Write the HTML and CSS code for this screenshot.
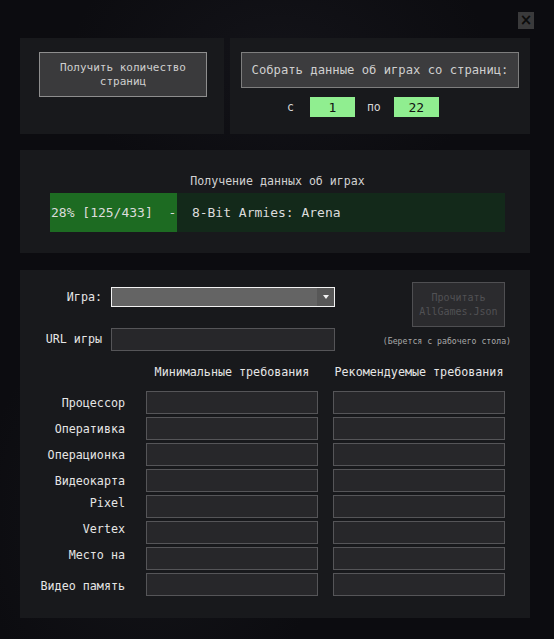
FILE: index.html
```html
<!DOCTYPE html>
<html lang="ru">
<head>
<meta charset="utf-8">
<title>Парсер игр</title>
<link rel="stylesheet" href="styles.css">
</head>
<body>
<div class="window">
  <div class="topbar"><button class="close">×</button></div>

  <div class="row1">
    <section class="panel p-count">
      <button class="btn btn-count">Получить количество<br>страниц</button>
    </section>
    <section class="panel p-collect">
      <button class="btn btn-collect">Собрать данные об играх со страниц:</button>
      <div class="range">
        <span class="rl">с</span>
        <input class="green" value="1" readonly>
        <span class="rl po">по</span>
        <input class="green" value="22" readonly>
      </div>
    </section>
  </div>

  <section class="panel p-progress">
    <div class="ptitle">Получение данных об играх</div>
    <div class="bar">
      <div class="fill" style="width:28%"></div>
      <span class="bar-text">28% [125/433]  -  8-Bit Armies: Arena</span>
    </div>
  </section>

  <section class="panel p-main">
    <div class="top">
      <label class="lbl lbl-game">Игра:</label>
      <div class="select"><span class="sel-field"></span><span class="sel-arrow"></span></div>
      <button class="btn-read" disabled>Прочитать<br>AllGames.Json</button>

      <label class="lbl lbl-url">URL игры</label>
      <input class="field url" readonly>
      <span class="note">(Берется с рабочего стола)</span>
    </div>

    <div class="table">
      <span></span>
      <div class="head">Минимальные требования</div>
      <div class="head">Рекомендуемые требования</div>

      <label class="tl">Процессор</label><input class="field" readonly><input class="field" readonly>
      <label class="tl">Оперативка</label><input class="field" readonly><input class="field" readonly>
      <label class="tl">Операционка</label><input class="field" readonly><input class="field" readonly>
      <label class="tl">Видеокарта</label><input class="field" readonly><input class="field" readonly>
      <label class="tl up">Pixel</label><input class="field" readonly><input class="field" readonly>
      <label class="tl up">Vertex</label><input class="field" readonly><input class="field" readonly>
      <label class="tl up">Место на</label><input class="field" readonly><input class="field" readonly>
      <label class="tl down">Видео память</label><input class="field" readonly><input class="field" readonly>
    </div>
  </section>
</div>
</body>
</html>
```

FILE: styles.css
```css
* { box-sizing: border-box; }

html, body {
  margin: 0;
  height: 100%;
}

body {
  background:
    radial-gradient(ellipse 300px 200px at 280px 60px, rgba(40, 40, 50, 0.25), transparent 70%),
    radial-gradient(ellipse 250px 300px at 150px 520px, rgba(40, 42, 48, 0.25), transparent 70%),
    #0c0c10;
  font-family: "DejaVu Sans Mono", "Liberation Mono", monospace;
  color: #e2e2e2;
  overflow: hidden;
}

.window {
  width: 510px;
  margin-left: 20px;
}

.topbar {
  height: 38px;
  display: flex;
  justify-content: flex-end;
  align-items: flex-start;
}

.close {
  margin-top: 12px;
  margin-right: -4px;
  width: 16px;
  height: 17px;
  padding: 0;
  border: none;
  background: #3a3a3b;
  color: #0c0c0c;
  font: bold 15px/17px "DejaVu Sans", sans-serif;
  text-align: center;
}

.panel {
  background: #18191c;
}

.row1 {
  display: flex;
  gap: 6px;
  height: 96px;
}

.btn {
  display: block;
  padding: 0;
  background: #3a3a3c;
  border: 1px solid #8e8e8e;
  color: #cfcfcf;
  font-family: "DejaVu Sans Mono", monospace;
  text-align: center;
}

.p-count {
  width: 204px;
  padding: 14px 0 0 19px;
}

.btn-count {
  width: 168px;
  height: 45px;
  font-size: 11px;
  line-height: 14px;
}

.p-collect {
  flex: 1;
  padding: 14px 11px 0;
}

.btn-collect {
  width: 278px;
  height: 36px;
  font-size: 12.2px;
  border-color: #7e7e7e;
  background: #3c3c3e;
}

.range {
  display: flex;
  align-items: center;
  margin-top: 9px;
  padding-left: 46px;
  height: 20px;
}

.rl {
  font-size: 11.5px;
  color: #d8d8d8;
  margin-right: 16px;
}

.rl.po {
  margin-left: 12px;
  margin-right: 13px;
}

.green {
  width: 45px;
  height: 20px;
  border: none;
  background: #90ee90;
  color: #111;
  font: 13px "DejaVu Sans Mono", monospace;
  text-align: center;
  padding: 0;
  outline: none;
}

.p-progress {
  margin-top: 16px;
  height: 103px;
  padding: 24px 25px 0 30px;
}

.ptitle {
  text-align: center;
  font-size: 11.6px;
  line-height: 14px;
  color: #d2d2d2;
  margin-bottom: 5px;
}

.bar {
  display: grid;
  height: 39px;
  background: #13291a;
  align-items: center;
}

.fill {
  grid-area: 1 / 1;
  height: 100%;
  background: #1d6b22;
}

.bar-text {
  grid-area: 1 / 1;
  white-space: pre;
  font-size: 13px;
  padding-left: 1px;
  color: #dcdcdc;
}

.p-main {
  margin-top: 17px;
  height: 348px;
  padding-top: 12px;
}

.top {
  display: grid;
  grid-template-columns: 82px 224px 1fr;
  column-gap: 9px;
  align-items: start;
}

.lbl {
  text-align: right;
  font-size: 11.7px;
  color: #e6e6e6;
}

.lbl-game {
  margin-top: 5px;
  line-height: 20px;
}

.lbl-url {
  margin-top: 1px;
  line-height: 23px;
}

.select {
  margin-top: 5px;
  height: 20px;
  display: flex;
  border: 1px solid #f2f2f2;
  background: #646464;
}

.sel-field {
  flex: 1;
}

.sel-arrow {
  width: 17px;
  background: #575757;
  display: flex;
  align-items: center;
  justify-content: center;
}

.sel-arrow::before {
  content: "";
  border-left: 3px solid transparent;
  border-right: 3px solid transparent;
  border-top: 4px solid #f0f0f0;
}

.btn-read {
  justify-self: start;
  margin-left: 68px;
  width: 93px;
  height: 45px;
  padding: 0;
  background: #2b2b2e;
  border: 1px solid #4f4f52;
  color: #515154;
  font: 10px/14px "DejaVu Sans Mono", monospace;
  text-align: center;
}

.field {
  display: block;
  width: 100%;
  height: 23px;
  padding: 0;
  background: #27272a;
  border: 1px solid #555558;
  color: #ddd;
  outline: none;
}

.url {
  margin-top: 1px;
}

.note {
  justify-self: end;
  margin-top: 9px;
  margin-right: 19px;
  font-size: 8.2px;
  line-height: 10px;
  color: #a8a8a8;
}

.table {
  display: grid;
  grid-template-columns: 111px 172px 172px;
  column-gap: 15px;
  row-gap: 3px;
  margin-top: 14px;
  align-items: center;
}

.head {
  text-align: center;
  font-size: 11.7px;
  line-height: 14px;
  color: #e6e6e6;
  margin-bottom: 9px;
}

.tl {
  text-align: right;
  padding-right: 6px;
  font-size: 11.7px;
  line-height: 14px;
  color: #e6e6e6;
}

.tl.up {
  margin-bottom: 7px;
}

.tl.down {
  margin-top: 3px;
}
```
